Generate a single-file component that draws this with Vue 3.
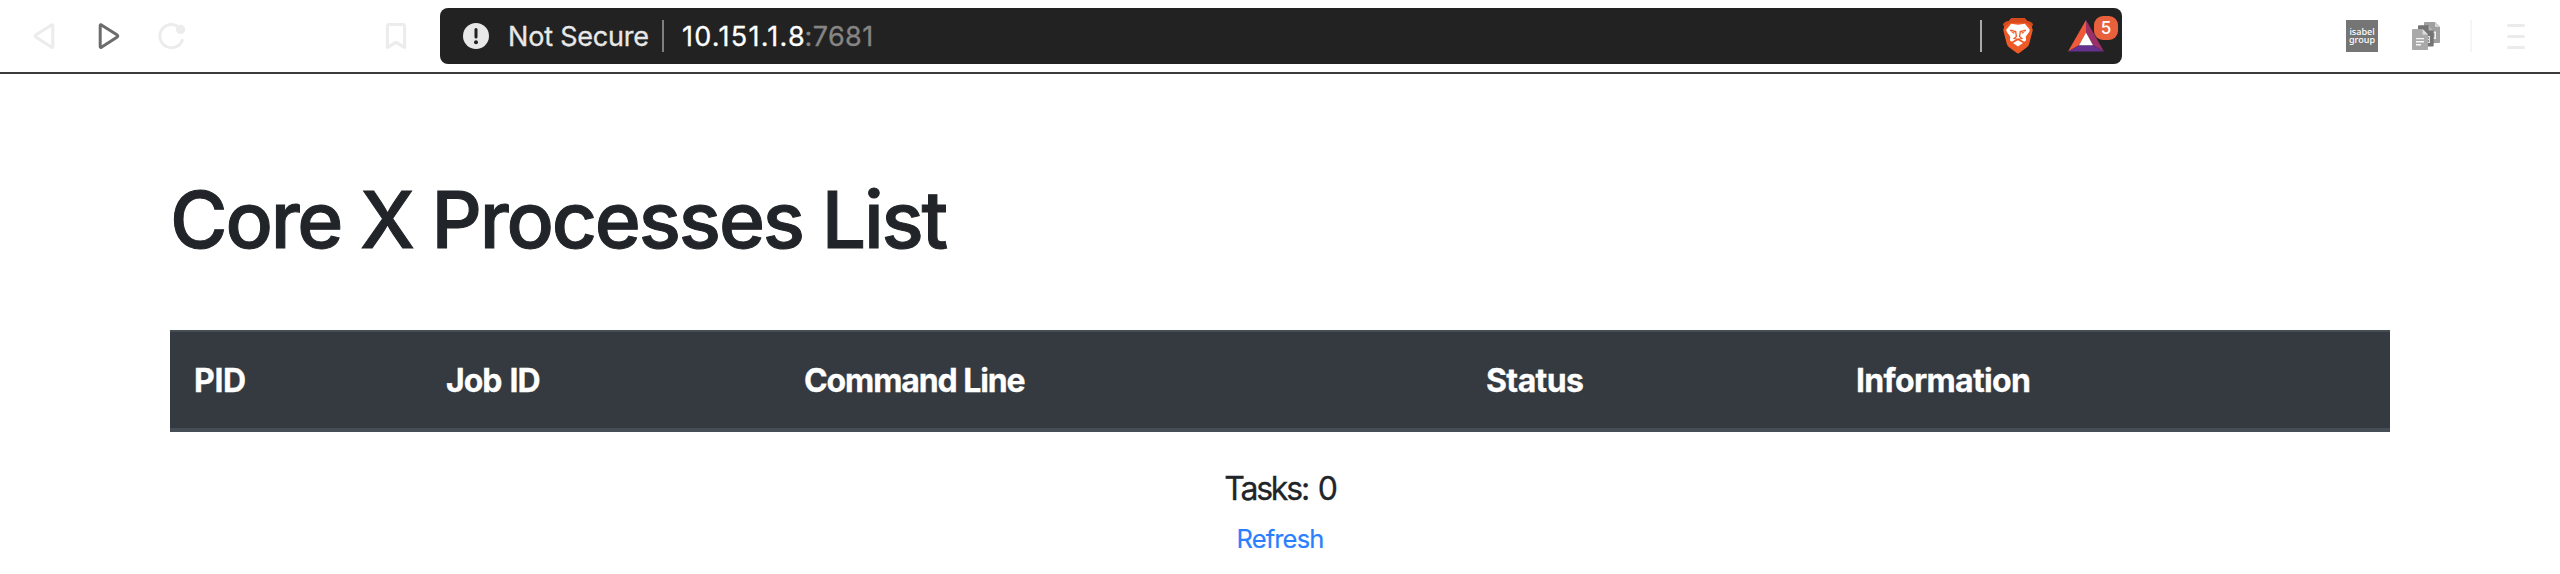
<script setup>
const columns = [
  { key: 'pid', label: 'PID' },
  { key: 'job', label: 'Job ID' },
  { key: 'command', label: 'Command Line' },
  { key: 'status', label: 'Status' },
  { key: 'info', label: 'Information' }
]
const taskCount = 0
</script>

<template>
  <div class="window">
    <header class="toolbar">
      <nav class="nav">
        <svg class="icon back" width="32" height="32" viewBox="0 0 32 32">
          <path d="M23.6 4.9 8.1 14.8Q6.3 16 8.1 17.3L23.6 27.3Q24.8 27.9 24.8 26.4V5.8Q24.8 4.2 23.6 4.9Z" />
        </svg>
        <svg class="icon forward" width="32" height="32" viewBox="0 0 32 32">
          <path d="M8.4 4.9 23.9 14.8Q25.7 16 23.9 17.3L8.4 27.3Q7.2 27.9 7.2 26.4V5.8Q7.2 4.2 8.4 4.9Z" />
        </svg>
        <svg class="icon reload" width="32" height="32" viewBox="0 0 32 32">
          <path d="M26.3 20.4A11.6 11.6 0 1 1 22.4 6.8" />
          <circle class="dot" cx="24.6" cy="9.4" r="4.6" />
        </svg>
        <svg class="icon bookmark" width="32" height="32" viewBox="0 0 32 32">
          <path d="M9.2 4.4H22.8Q24.6 4.4 24.6 6.2V27.4L16 22.4 7.4 27.4V6.2Q7.4 4.4 9.2 4.4Z" />
        </svg>
      </nav>

      <div class="address">
        <svg class="warn" width="26" height="26" viewBox="0 0 26 26">
          <circle cx="13" cy="13" r="13" fill="#e8e8e8" />
          <rect x="11.5" y="5" width="3" height="10.5" rx="1.5" fill="#222" />
          <circle cx="13" cy="19.3" r="2" fill="#222" />
        </svg>
        <span class="secure">Not Secure</span>
        <span class="bar"></span>
        <span class="url">10.151.1.8</span><span class="port">:7681</span>
        <span class="bar light"></span>
        <svg class="shield" width="32" height="36" viewBox="0 0 32 36">
          <path fill="#ee5a26" d="M9.5 0H22.5L25.5 3.3Q28.3 2.8 30.8 6L29.8 9 30.8 12 27.4 25.3Q26.8 28 24.6 29.6L17.6 34.8Q16 36 14.4 34.8L7.4 29.6Q5.2 28 4.6 25.3L1.2 12 2.2 9 1.2 6Q3.7 2.8 6.5 3.3Z" />
          <path fill="#d84a1c" d="M9.5 0H22.5L25.5 3.3Q28.3 2.8 30.8 6L29.8 9 25 5.2 16 4.4 7 5.2 2.2 9 1.2 6Q3.7 2.8 6.5 3.3Z" />
          <path fill="#fff" d="M9.2 5.8 16 6.8 22.8 5.8 27.6 11.5Q28 13 26.8 14.6L24 18.2Q23.4 19.2 24 20.4 24.6 22.2 22.9 23.6L21.4 23.3 18 21.2 16 20.4 14 21.2 10.6 23.3 9.1 23.6Q7.4 22.2 8 20.4 8.6 19.2 8 18.2L5.2 14.6Q4 13 4.4 11.5Z" />
          <path fill="#fff" d="M16 22.3 21 25 16 28.4 11 25Z" />
          <path fill="none" stroke="#ee5a26" stroke-width="1.3" d="M8 12.2 13.7 13.6 14.4 18.6 12.2 20.4 16 21.4 19.8 20.4 17.6 18.6 18.3 13.6 24 12.2" />
          <path fill="#ee5a26" d="M8.2 13 13 14.8 11.6 15.8ZM23.8 13 19 14.8 20.4 15.8Z" />
        </svg>
        <div class="rewards">
          <svg width="36" height="32" viewBox="0 0 36 32">
            <path fill="#f05a38" d="M18 0V12.6L11 25.3 0 31.6Z" />
            <path fill="#9b2f68" d="M18 0 36 31.6 25 25.3 18 12.6Z" />
            <path fill="#66308f" d="M0 31.6 11 25.3H25L36 31.6Z" />
            <path fill="#fff" d="M18 12.6 25 25.3H11Z" />
          </svg>
          <span class="badge">5</span>
        </div>
      </div>

      <div class="extensions">
        <svg class="isabel" width="32" height="32" viewBox="0 0 32 32">
          <rect width="32" height="32" fill="#757575" />
          <text x="3.4" y="15" textLength="25.4" lengthAdjust="spacingAndGlyphs">isabel</text>
          <text x="3" y="22.5" textLength="26" lengthAdjust="spacingAndGlyphs">group</text>
        </svg>
        <svg class="docs" width="30" height="30" viewBox="0 0 30 30">
          <path fill="#a0a0a0" d="M13 2Q13 1 14 1H24L29 6V21Q29 22 28 22H14Q13 22 13 21Z" />
          <path fill="#d4d4d4" d="M24 1 29 6H24Z" />
          <path fill="#eee" d="M22 10.5H25V18H22V16.5H23.5V12H22Z" />
          <path fill="#747474" d="M7 5.3Q7 4.3 8 4.3H17.6L22.7 9.4V24.6Q22.7 25.6 21.7 25.6H8Q7 25.6 7 24.6Z" />
          <path fill="#b4b4b4" d="M17.6 4.3 22.7 9.4H17.6Z" />
          <path fill="#ddd" d="M16.5 15H19V22H16.5V20.8H17.8V19H16.5V17.8H17.8V16.2H16.5Z" />
          <path fill="#a9a9a9" d="M1 9Q1 8 2 8H11.6L17 13.4V28Q17 29 16 29H2Q1 29 1 28Z" />
          <path fill="#dedede" d="M11.6 8 17 13.4H11.6Z" />
          <path stroke="#f5f5f5" stroke-width="1.4" d="M5 17.6H13M5 20.7H13M5 23.7H10" />
        </svg>
        <span class="rule"></span>
        <span class="menu"><i></i><i></i><i></i></span>
      </div>
    </header>

    <main class="page">
      <h1>Core X Processes List</h1>
      <table>
        <thead>
          <tr>
            <th v-for="c in columns" :key="c.key" :class="c.key"><span>{{ c.label }}</span></th>
          </tr>
        </thead>
      </table>
      <footer>
        <div class="tasks">Tasks: {{ taskCount }}</div>
        <a class="refresh">Refresh</a>
      </footer>
    </main>
  </div>
</template>

<style scoped>
.window {
  height: 574px;
  overflow: hidden;
  background: #fff;
  color: #212529;
  font-family: Inter, "Liberation Sans", sans-serif;
}
.toolbar {
  box-sizing: border-box;
  height: 74px;
  display: flex;
  align-items: flex-start;
  padding-top: 8px;
  border-bottom: 2px solid #3b3b3d;
}
.nav {
  width: 440px;
  height: 56px;
  display: flex;
  align-items: center;
  flex: none;
}
.icon {
  fill: none;
  stroke: #ececec;
  stroke-width: 3;
  stroke-linejoin: round;
  stroke-linecap: round;
}
.back { margin-left: 28px; }
.forward { margin-left: 33px; stroke: #6c6c6c; }
.reload { margin-left: 31px; }
.dot { fill: #ececec; stroke: none; }
.bookmark { margin-left: 192px; }

.address {
  box-sizing: border-box;
  width: 1682px;
  height: 56px;
  flex: none;
  display: flex;
  align-items: center;
  padding: 0 18px 0 23px;
  border-radius: 8px;
  background: #222;
  font-size: 27px;
  line-height: 32px;
  white-space: nowrap;
}
.secure, .url, .port { padding-top: 1px; -webkit-text-stroke: 0.3px currentColor; }
.secure { width: 154px; margin-left: 19px; color: #e8e8e8; letter-spacing: -0.2px; }
.bar { width: 2px; height: 32px; background: #808080; }
.url { width: 122.5px; margin-left: 18px; color: #fff; letter-spacing: 1.25px; }
.port { color: #858585; letter-spacing: 0.4px; }
.bar.light { margin-left: auto; background: #a9a9a9; }
.shield { margin-left: 20px; }
.rewards { position: relative; width: 36px; height: 32px; margin-left: 34px; }
.rewards svg { display: block; }
.badge {
  position: absolute;
  left: 26px;
  top: -4px;
  width: 24px;
  height: 24px;
  border-radius: 9px;
  background: #e9603d;
  color: #fff;
  font-size: 17px;
  font-weight: 500;
  line-height: 24px;
  text-align: center;
}

.extensions {
  height: 56px;
  margin-left: 224px;
  display: flex;
  align-items: center;
}
.isabel text { fill: #fff; font: 500 8.8px "Noto Sans", sans-serif; }
.docs { margin-left: 33px; }
.rule { width: 2px; height: 32px; margin-left: 29px; background: #f6f6f6; }
.menu { display: flex; flex-direction: column; gap: 8px; margin-left: 35px; }
.menu i { width: 18px; height: 3px; border-radius: 1.5px; background: #ebebeb; }

.page { width: 2220px; margin: 0 auto; padding-top: 98px; }
h1 {
  margin: 0 0 62px;
  font-size: 78.5px;
  font-weight: 500;
  line-height: 96px;
  letter-spacing: -2.18px;
  -webkit-text-stroke: 1px currentColor;
}
table {
  width: 2220px;
  table-layout: fixed;
  border-collapse: separate;
  border-spacing: 0;
  background: #343a40;
  color: #fff;
}
th {
  box-sizing: border-box;
  height: 102px;
  padding: 2px 24px 0;
  border-top: 2px solid #454d55;
  border-bottom: 4px solid #454d55;
  text-align: left;
  vertical-align: middle;
  font-size: 32px;
  font-weight: 700;
  line-height: 48px;
  white-space: nowrap;
  -webkit-text-stroke: 0.3px currentColor;
}
.pid { width: 252px; letter-spacing: -0.3px; }
.job { width: 358px; letter-spacing: -1px; word-spacing: 1.5px; }
.command { width: 682px; letter-spacing: -1.1px; }
.status { width: 370px; letter-spacing: -0.6px; }
.info { letter-spacing: -0.66px; }
footer {
  display: flex;
  flex-direction: column;
  align-items: center;
  padding-top: 33px;
}
.tasks {
  font-size: 32px;
  line-height: 48px;
  letter-spacing: -2.2px;
  word-spacing: 3px;
  -webkit-text-stroke: 0.3px currentColor;
}
.refresh {
  margin-top: 7px;
  color: #2a7fff;
  font-size: 25.5px;
  line-height: 38px;
  letter-spacing: -0.85px;
  -webkit-text-stroke: 0.2px currentColor;
}
</style>
